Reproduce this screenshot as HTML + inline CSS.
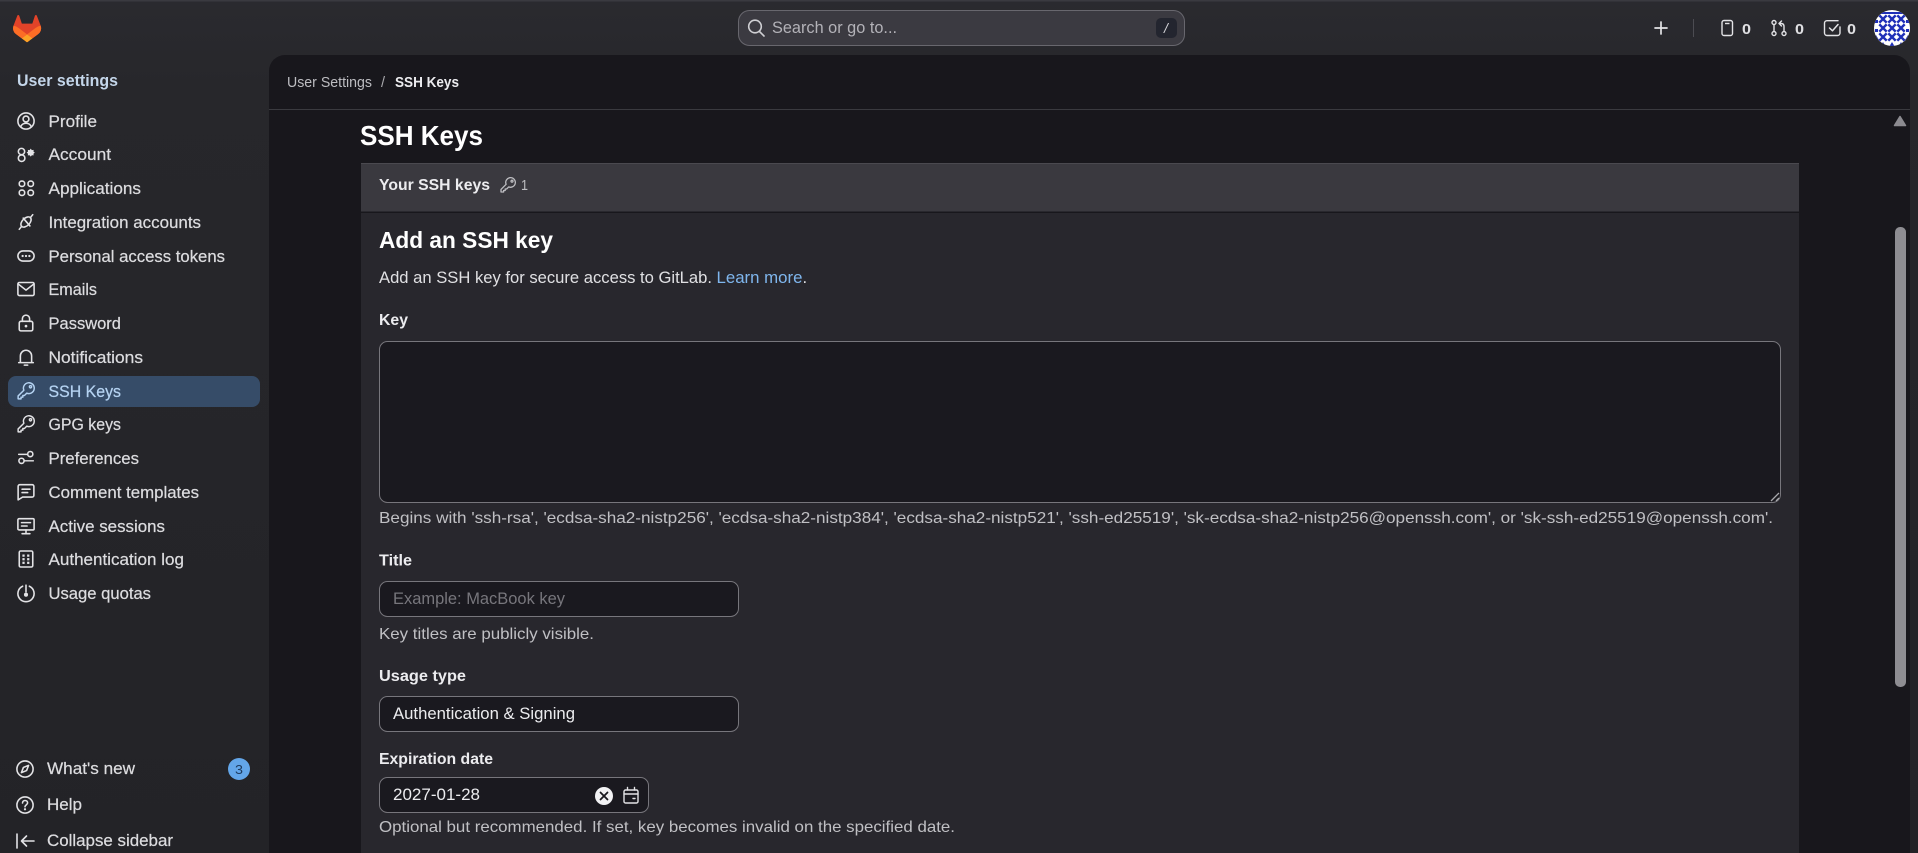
<!DOCTYPE html>
<html lang="en"><head><meta charset="utf-8"><title>SSH Keys · User Settings · GitLab</title>
<style>
html,body{margin:0;padding:0;width:1918px;height:853px;overflow:hidden;background:#242428}
svg{display:block}
text{font-family:"Liberation Sans",sans-serif;font-size:16.5px;fill:#e0e0e3}
.b{font-weight:bold}
.nav{fill:#dcdcdf;font-size:16.5px;stroke:#dcdcdf;stroke-width:.22}
.h{fill:#c0c0c4;font-size:16px}
.i{fill:none;stroke:#e3e3e6;stroke-width:1.4;stroke-linecap:round;stroke-linejoin:round}
.f{fill:#e3e3e6}
</style></head><body>
<svg width="1918" height="853" viewBox="0 0 1918 853" xmlns="http://www.w3.org/2000/svg">
<defs>
<linearGradient id="bg" x1="0" y1="0" x2="0" y2="1"><stop offset="0" stop-color="#2a2a2f"/><stop offset=".1" stop-color="#27272b"/><stop offset="1" stop-color="#232327"/></linearGradient>
<clipPath id="av"><circle cx="1892" cy="28" r="18"/></clipPath>
<pattern id="tile" x="1878.5" y="14.500" width="9" height="9" patternUnits="userSpaceOnUse">
<rect width="9" height="9" fill="#fff"/>
<path d="M.8.800 8.200 8.200M8.200.800.800 8.200" stroke="#1f2fb8" stroke-width="2.400"/>
</pattern>
<path id="key" d="M6.100 7.300 1 12.400V15H3.600V13.500H5.200V12H6.600L8.700 9.900A4.800 4.800 0 1 0 6.100 7.300ZM11 4.200a1 1 0 1 1 0 .01Z" fill="none" stroke-width="1.300" stroke-linecap="round" stroke-linejoin="round"/>
</defs>

<rect width="1918" height="853" fill="url(#bg)"/>
<rect width="1918" height="1.5" fill="#3a3a40"/>

<!-- logo -->
<g transform="translate(13,15) scale(1.13)">
<path d="m24.507 9.5-.034-.09L21.082.562a.896.896 0 0 0-1.694.091l-2.29 7.01H7.825L5.535.653a.898.898 0 0 0-1.694-.09L.451 9.411.416 9.5a6.297 6.297 0 0 0 2.09 7.278l.012.01.03.022 5.16 3.867 2.56 1.935 1.554 1.176a1.051 1.051 0 0 0 1.268 0l1.555-1.176 2.56-1.935 5.197-3.89.014-.01A6.297 6.297 0 0 0 24.507 9.5Z" fill="#E24329"/>
<path d="m24.507 9.5-.034-.09a11.44 11.44 0 0 0-4.56 2.051l-7.447 5.632 4.742 3.584 5.197-3.89.014-.01A6.297 6.297 0 0 0 24.507 9.5Z" fill="#FC6D26"/>
<path d="m7.707 20.677 2.56 1.935 1.555 1.176a1.051 1.051 0 0 0 1.268 0l1.555-1.176 2.56-1.935-4.743-3.584-4.755 3.584Z" fill="#FCA326"/>
<path d="M5.01 11.461a11.43 11.43 0 0 0-4.56-2.05L.416 9.5a6.297 6.297 0 0 0 2.09 7.278l.012.01.03.022 5.16 3.867 4.745-3.584-7.444-5.632Z" fill="#FC6D26"/>
</g>

<!-- search -->
<rect x="738.5" y="10.5" width="446" height="35" rx="11" fill="#3b3a41" stroke="#68676e"/>
<circle cx="755" cy="26.5" r="6.3" fill="none" stroke="#cfcfd3" stroke-width="1.6"/>
<path d="M759.5 31.5 764 36" stroke="#cfcfd3" stroke-width="1.6" stroke-linecap="round"/>
<text x="772" y="33" textLength="125" lengthAdjust="spacingAndGlyphs" style="fill:#b3b2b8;font-size:16.5px">Search or go to...</text>
<rect x="1156" y="18" width="21" height="20" rx="5" fill="#23252f"/>
<text x="1164" y="33" style="fill:#d4d4d8;font-size:14px;font-style:italic">/</text>

<!-- top right -->
<path d="M1661 22v12M1655 28h12" stroke="#e3e3e6" stroke-width="1.7" stroke-linecap="round"/>
<rect x="1693" y="19" width="1" height="18" fill="#4c4c52"/>
<rect x="1722" y="20.5" width="10.5" height="15" rx="2" fill="none" stroke="#e3e3e6" stroke-width="1.4"/>
<path d="M1725 23.5h4.5" stroke="#e3e3e6" stroke-width="1.4"/>
<text x="1742" y="34" class="b" textLength="9" lengthAdjust="spacingAndGlyphs" style="font-size:15px">0</text>
<g fill="none" stroke="#e3e3e6" stroke-width="1.4" stroke-linecap="round" stroke-linejoin="round">
<circle cx="1774" cy="22.5" r="2"/><circle cx="1774" cy="33.5" r="2"/><circle cx="1784" cy="33.5" r="2"/>
<path d="M1774 24.5v7M1784 31.5v-5c0-2-1-3-3-3h-1M1781.5 21l-2.5 2.5 2.5 2.5"/>
<path d="M1838 20.700H1827a2.500 2.500 0 0 0-2.500 2.500V33a2.500 2.500 0 0 0 2.500 2.500H1837.500a2.500 2.500 0 0 0 2.500-2.500V27"/>
<path d="M1829.500 28l3 2.800 5.500-6.300" stroke-width="1.500"/>
</g>
<text x="1795" y="34" class="b" textLength="9" lengthAdjust="spacingAndGlyphs" style="font-size:15px">0</text>
<text x="1847" y="34" class="b" textLength="9" lengthAdjust="spacingAndGlyphs" style="font-size:15px">0</text>
<g clip-path="url(#av)">
<rect x="1872" y="8" width="40" height="40" fill="#fff"/>
<rect x="1878.5" y="14.500" width="27" height="27" fill="url(#tile)"/>
<path d="M1878 12h28v2h-28ZM1875 20h3v3h-3ZM1906 20h3v3h-3ZM1875 29h3v3h-3ZM1906 29h3v3h-3Z" fill="#1f2fb8"/>
<path d="M1880 47l3-5 3 5ZM1889 47l3-5 3 5ZM1898 47l3-5 3 5ZM1873 40l3-5 3 5ZM1905 40l3-5 3 5Z" fill="#1f2fb8"/>
</g>

<!-- main panel -->
<path d="M269 853V71a16 16 0 0 1 16-16H1894a16 16 0 0 1 16 16V853Z" fill="#18171c"/>
<rect x="269" y="109" width="1641" height="1" fill="#3a3a3f"/>
<text x="287" y="87" textLength="85" lengthAdjust="spacingAndGlyphs" style="fill:#bdbdc1;font-size:14.5px">User Settings</text>
<text x="381" y="87" style="fill:#a9a9ad;font-size:14.5px">/</text>
<text x="395" y="87" class="b" textLength="64" lengthAdjust="spacingAndGlyphs" style="fill:#ececef;font-size:14.5px">SSH Keys</text>
<text x="360" y="145" class="b" textLength="123" lengthAdjust="spacingAndGlyphs" style="fill:#fff;font-size:27.5px">SSH Keys</text>

<!-- scrollbar -->
<path d="M1900 116.500 1905.500 125.500H1894.500Z" fill="#8c8b90" stroke="#8c8b90" stroke-width="1.500" stroke-linejoin="round"/>
<rect x="1895" y="227" width="11" height="460" rx="5" fill="#8e8d92"/>

<!-- card -->
<rect x="361" y="163" width="1438" height="690" fill="#28272d"/>
<rect x="361" y="163" width="1438" height="49" fill="#3a393f"/>
<rect x="361" y="163" width="1438" height="1" fill="#4a494f"/>
<rect x="361" y="211.500" width="1438" height="1.500" fill="#18171c"/>
<text x="379" y="190" class="b" textLength="111" lengthAdjust="spacingAndGlyphs" style="fill:#ececef;font-size:16px">Your SSH keys</text>
<g transform="translate(500,177)" stroke="#bdbdc1"><use href="#key"/></g>
<text x="521" y="190" textLength="7" lengthAdjust="spacingAndGlyphs" style="fill:#bdbdc1;font-size:15px">1</text>
<text x="379" y="248" class="b" textLength="174" lengthAdjust="spacingAndGlyphs" style="fill:#fff;font-size:23.500px">Add an SSH key</text>
<text x="379" y="283" textLength="333" lengthAdjust="spacingAndGlyphs" style="fill:#e0e0e3">Add an SSH key for secure access to GitLab.</text>
<text x="716.500" y="283" textLength="86" lengthAdjust="spacingAndGlyphs" style="fill:#7fb6ed">Learn more</text>
<text x="802.500" y="283" style="fill:#e0e0e3">.</text>
<text x="379" y="325" class="b" textLength="29" lengthAdjust="spacingAndGlyphs" style="fill:#ececef;font-size:16px">Key</text>
<rect x="379.500" y="341.500" width="1401" height="161" rx="8" fill="#1a191f" stroke="#77767c"/>
<path d="M1771 501l8-8M1776 501l3-3" stroke="#a8a8ac" stroke-width="1.300"/>
<text x="379" y="523" textLength="1394" lengthAdjust="spacingAndGlyphs" class="h">Begins with 'ssh-rsa', 'ecdsa-sha2-nistp256', 'ecdsa-sha2-nistp384', 'ecdsa-sha2-nistp521', 'ssh-ed25519', 'sk-ecdsa-sha2-nistp256@openssh.com', or 'sk-ssh-ed25519@openssh.com'.</text>
<text x="379" y="565.500" class="b" textLength="33" lengthAdjust="spacingAndGlyphs" style="fill:#ececef;font-size:16px">Title</text>
<rect x="379.500" y="581.500" width="359" height="35" rx="8" fill="#1a191f" stroke="#77767c"/>
<text x="393" y="604" textLength="172" lengthAdjust="spacingAndGlyphs" style="fill:#77767c">Example: MacBook key</text>
<text x="379" y="639" textLength="215" lengthAdjust="spacingAndGlyphs" class="h">Key titles are publicly visible.</text>
<text x="379" y="681" class="b" textLength="87" lengthAdjust="spacingAndGlyphs" style="fill:#ececef;font-size:16px">Usage type</text>
<rect x="379.500" y="696.500" width="359" height="35" rx="8" fill="#1a191f" stroke="#77767c"/>
<text x="393" y="719" textLength="182" lengthAdjust="spacingAndGlyphs" style="fill:#ececef">Authentication &amp; Signing</text>
<text x="379" y="764" class="b" textLength="114" lengthAdjust="spacingAndGlyphs" style="fill:#ececef;font-size:16px">Expiration date</text>
<rect x="379.500" y="777.500" width="269" height="35" rx="8" fill="#1a191f" stroke="#77767c"/>
<text x="393" y="800" textLength="87" lengthAdjust="spacingAndGlyphs" style="fill:#ececef">2027-01-28</text>
<circle cx="604" cy="796" r="9" fill="#f2f2f4"/>
<path d="M600.500 792.500l7 7M607.500 792.500l-7 7" stroke="#1a191f" stroke-width="1.800" stroke-linecap="round"/>
<g fill="none" stroke="#e3e3e6" stroke-width="1.400" stroke-linejoin="round" stroke-linecap="round">
<rect x="624" y="790" width="14" height="13" rx="1.500"/><path d="M624 794h14M627.500 787.500v2.500M634.500 787.500v2.500"/><path d="M633 798.500h2"/>
</g>
<text x="379" y="832" textLength="576" lengthAdjust="spacingAndGlyphs" class="h">Optional but recommended. If set, key becomes invalid on the specified date.</text>

<!-- sidebar -->
<text x="17" y="86" class="b" textLength="101" lengthAdjust="spacingAndGlyphs" style="fill:#c4d6ea;font-size:16.500px">User settings</text>
<rect x="8" y="376" width="252" height="31" rx="8" fill="#364c68"/>

<text class="nav" x="48.500" y="127" textLength="48.500" lengthAdjust="spacingAndGlyphs">Profile</text>
<text class="nav" x="48.500" y="160" textLength="62.500" lengthAdjust="spacingAndGlyphs">Account</text>
<text class="nav" x="48.500" y="194" textLength="92.500" lengthAdjust="spacingAndGlyphs">Applications</text>
<text class="nav" x="48.500" y="228" textLength="152.500" lengthAdjust="spacingAndGlyphs">Integration accounts</text>
<text class="nav" x="48.500" y="262" textLength="176.500" lengthAdjust="spacingAndGlyphs">Personal access tokens</text>
<text class="nav" x="48.500" y="295" textLength="48.500" lengthAdjust="spacingAndGlyphs">Emails</text>
<text class="nav" x="48.500" y="329" textLength="72.500" lengthAdjust="spacingAndGlyphs">Password</text>
<text class="nav" x="48.500" y="363" textLength="94.500" lengthAdjust="spacingAndGlyphs">Notifications</text>
<text class="nav" x="48.500" y="397" textLength="72.500" lengthAdjust="spacingAndGlyphs" style="fill:#b5d3f2;stroke:#b5d3f2">SSH Keys</text>
<text class="nav" x="48.500" y="430" textLength="72.500" lengthAdjust="spacingAndGlyphs">GPG keys</text>
<text class="nav" x="48.500" y="464" textLength="90.500" lengthAdjust="spacingAndGlyphs">Preferences</text>
<text class="nav" x="48.500" y="498" textLength="150.500" lengthAdjust="spacingAndGlyphs">Comment templates</text>
<text class="nav" x="48.500" y="532" textLength="116.500" lengthAdjust="spacingAndGlyphs">Active sessions</text>
<text class="nav" x="48.500" y="565" textLength="135.500" lengthAdjust="spacingAndGlyphs">Authentication log</text>
<text class="nav" x="48.500" y="599" textLength="102.500" lengthAdjust="spacingAndGlyphs">Usage quotas</text>
<text class="nav" x="47" y="774" textLength="88" lengthAdjust="spacingAndGlyphs">What's new</text>
<text class="nav" x="47" y="810" textLength="35" lengthAdjust="spacingAndGlyphs">Help</text>
<text class="nav" x="47" y="846" textLength="126" lengthAdjust="spacingAndGlyphs">Collapse sidebar</text>

<!-- sidebar icons -->
<g transform="translate(17,112) scale(1.125)"><g class="i"><circle cx="8" cy="8" r="7.200"/><circle cx="8" cy="6.200" r="2.600"/><path d="M3.300 13.300C4 11 5.800 10 8 10s4 1 4.700 3.300"/></g></g>
<g transform="translate(17,145) scale(1.125)"><g class="i"><circle cx="4" cy="5.800" r="2.800"/><rect x="1.200" y="8.800" width="5.800" height="5.800" rx="2.800"/></g><path class="f" d="M12.200 3.200l1 1.300 1.600-.2-.2 1.500 1.200 1-1.200 1 .2 1.400-1.600-.1-1 1.200-1-1.200-1.600.1.200-1.400-1.200-1 1.200-1-.2-1.500 1.600.2Z"/></g>
<g transform="translate(17,179) scale(1.125)"><g class="i"><rect x="2" y="1.800" width="4.800" height="4.800" rx="2.200"/><rect x="9.800" y="1.800" width="4.800" height="4.800" rx="2.200"/><rect x="2" y="9.800" width="4.800" height="4.800" rx="2.200"/><rect x="9.800" y="9.800" width="4.800" height="4.800" rx="2.200"/></g></g>
<g transform="translate(17,213) scale(1.125)"><g class="i"><ellipse cx="8" cy="8" rx="5.500" ry="3.300" transform="rotate(-45 8 8)"/><path d="M2 14.500 4.200 11.800M14 1.500 11.800 4.200M5.500 4.500 11.500 11.500"/></g></g>
<g transform="translate(17,247) scale(1.125)"><g class="i"><rect x=".8" y="3.500" width="14.400" height="9" rx="4.500"/></g><circle class="f" cx="5" cy="8" r="1"/><circle class="f" cx="8" cy="8" r="1"/><circle class="f" cx="11" cy="8" r="1"/></g>
<g transform="translate(17,280) scale(1.125)"><g class="i"><rect x=".8" y="2.200" width="14.400" height="11.600" rx="1.200"/><path d="M1 3.500 8 9l7-5.500"/></g></g>
<g transform="translate(17,314) scale(1.125)"><g class="i"><rect x="2" y="6.500" width="12" height="8.500" rx="1.500"/><path d="M4.800 6.500V4.200a3.200 3.200 0 0 1 6.400 0v2.300"/></g><circle class="f" cx="8" cy="10.800" r="1.200"/></g>
<g transform="translate(17,348) scale(1.125)"><g class="i"><path d="M1.500 13h13M3 13V7a5 5 0 0 1 10 0v6M6.500 15.200h3"/></g></g>
<g transform="translate(17,382) scale(1.125)" stroke="#b5d3f2"><use href="#key"/></g>
<g transform="translate(17,415) scale(1.125)" stroke="#e3e3e6"><use href="#key"/></g>
<g transform="translate(17,449) scale(1.125)"><g class="i"><circle cx="11.800" cy="4.500" r="2.300"/><circle cx="4" cy="10.500" r="2.300"/><path d="M1.500 4.800H9M6.800 10.500H14.500" stroke-width="1.300"/></g></g>
<g transform="translate(17,483) scale(1.125)"><g class="i"><path d="M2.500 1.500h11a1.500 1.500 0 0 1 1.500 1.500v8a1.500 1.500 0 0 1-1.500 1.500H5L1 15V3a1.500 1.500 0 0 1 1.500-1.500ZM4.500 5.500h7M4.500 8.500h5"/></g></g>
<g transform="translate(17,517) scale(1.125)"><g class="i"><rect x=".8" y="1.500" width="14.400" height="10" rx="1"/><path d="M4 5h8M4 8h5M8 11.500v3M4.500 14.800h7"/></g></g>
<g transform="translate(17,550) scale(1.125)"><g class="i"><rect x="2" y=".9" width="12" height="14.200" rx="1.200"/></g><g class="f"><rect x="4.800" y="4" width="2" height="2"/><rect x="9" y="4" width="2" height="2"/><rect x="4.800" y="7.200" width="2" height="2"/><rect x="9" y="7.200" width="2" height="2"/><rect x="4.800" y="10.400" width="2" height="2"/><rect x="9" y="10.400" width="2" height="2"/></g></g>
<g transform="translate(17,584) scale(1.125)"><g class="i"><path d="M5 2a7.200 7.200 0 1 0 6 0M8 1v6"/></g><circle class="f" cx="8" cy="9.500" r="1.800"/></g>
<g transform="translate(16,760) scale(1.125)"><g class="i"><circle cx="8" cy="8" r="7.200"/><path d="M11.200 4.800 9.400 9.400 4.800 11.200 6.600 6.600Z"/></g></g>
<g transform="translate(16,796) scale(1.125)"><g class="i"><circle cx="8" cy="8" r="7.200"/><path d="M5.800 6.200c0-1.300 1-2.200 2.200-2.200s2.300.8 2.300 2.100c0 1.800-2.300 1.700-2.300 3.500"/></g><circle class="f" cx="8" cy="11.800" r="1"/></g>
<path d="M17 834v14M34 841H21.500M26.500 836l-5 5 5 5" fill="none" stroke="#e3e3e6" stroke-width="1.600" stroke-linecap="round" stroke-linejoin="round"/>
<circle cx="239" cy="769" r="11" fill="#63a6e9"/>
<text x="235" y="774" textLength="8" lengthAdjust="spacingAndGlyphs" style="fill:#1d3b5f;font-size:13px">3</text>
</svg>
</body></html>
